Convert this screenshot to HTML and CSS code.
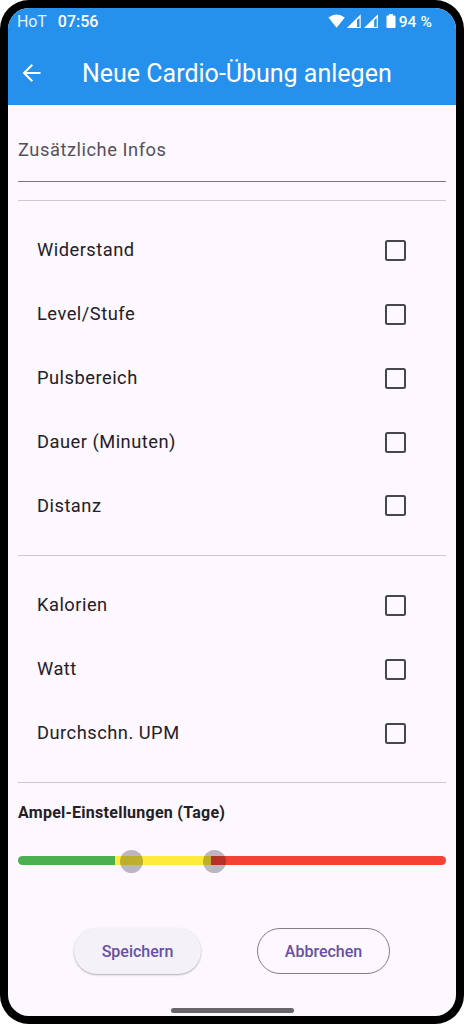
FILE: index.html
```
<!DOCTYPE html>
<html lang="de">
<head>
<meta charset="utf-8">
<title>Neue Cardio-Übung anlegen</title>
<link rel="stylesheet" href="styles.css">
</head>
<body>
<div class="phone">
  <div class="screen">
    <header class="header">
      <div class="status">
        <span class="carrier">HoT</span>
        <span class="clock">07:56</span>
        <svg class="status-icons" width="70" height="16" viewBox="0 0 70 16" fill="#fff">
          <path d="M.4 3.6Q8.5-2.5 16.8 3.6L8.6 13.8Z"/>
          <path fill-rule="evenodd" d="M18.800 14 32.700.2V14ZM29 6V13H31.500V4Z"/>
          <path fill-rule="evenodd" d="M36 14 49.900.2V14ZM46.200 6V13H48.700V4Z"/>
          <path d="M61 0h4v1.500h1.500q1 0 1 1V13q0 1-1 1H59.500q-1 0-1-1V2.500q0-1 1-1H61Z"/>
        </svg>
        <span class="battery">94 %</span>
      </div>
      <div class="appbar">
        <svg class="back" width="20" height="20" viewBox="0 0 20 20" fill="none" stroke="#fff" stroke-width="2">
          <path d="M18.500 10H2.500M10.300 1.700 2 10l8.300 8.300"/>
        </svg>
        <h1 class="title">Neue Cardio-Übung anlegen</h1>
      </div>
    </header>
    <main class="form">
      <div class="field">Zusätzliche Infos</div>
      <section class="group">
        <label class="row"><span>Widerstand</span><span class="box"></span></label>
        <label class="row"><span>Level/Stufe</span><span class="box"></span></label>
        <label class="row"><span>Pulsbereich</span><span class="box"></span></label>
        <label class="row"><span>Dauer (Minuten)</span><span class="box"></span></label>
        <label class="row"><span>Distanz</span><span class="box"></span></label>
      </section>
      <section class="group">
        <label class="row"><span>Kalorien</span><span class="box"></span></label>
        <label class="row"><span>Watt</span><span class="box"></span></label>
        <label class="row"><span>Durchschn. UPM</span><span class="box"></span></label>
      </section>
      <section class="limits">
        <h2 class="limits-title">Ampel-Einstellungen (Tage)</h2>
        <div class="slider">
          <div class="track"><i class="green"></i><i class="yellow"></i><i class="red"></i></div>
          <span class="thumb thumb-low"></span>
          <span class="thumb thumb-high"></span>
        </div>
      </section>
      <div class="actions">
        <button class="button save">Speichern</button>
        <button class="button cancel">Abbrechen</button>
      </div>
    </main>
    <div class="home"></div>
  </div>
</div>
</body>
</html>
```
FILE: styles.css
```
* { box-sizing: border-box; }
body {
  margin: 0;
  background: #fff;
  font-family: Roboto, sans-serif;
  color: #232027;
}
.phone {
  width: 464px;
  height: 1024px;
  padding: 8px;
  background: #000;
  border-radius: 29px;
}
.screen {
  height: 1008px;
  display: flex;
  flex-direction: column;
  background: #fdf7ff;
  border-radius: 21px;
  overflow: hidden;
}
.header {
  height: 97px;
  background: #2691ec;
  color: #fff;
}
.status {
  height: 27px;
  display: flex;
  align-items: center;
  padding: 0 24px 0 9px;
  font-size: 16px;
  line-height: 20px;
}
.carrier { color: #e4f1fd; letter-spacing: -.1px; }
.clock { margin-left: 11px; font-weight: 500; }
.status-icons { margin-left: auto; }
.battery { margin-left: 1px; font-size: 15.500px; font-weight: 500; letter-spacing: .1px; }
.appbar {
  height: 77px;
  display: flex;
  align-items: center;
  padding-left: 14px;
}
.back { margin-bottom: 2px; }
.title {
  margin: 0 0 0 40px;
  font-size: 25px;
  font-weight: 400;
  line-height: 32px;
}
.form { flex: 1; padding: 0 10px; }
.field {
  height: 77px;
  padding-top: 33px;
  border-bottom: 1px solid #7c7881;
  font-size: 18.300px;
  line-height: 24px;
  letter-spacing: .54px;
  color: #55515b;
  margin-bottom: 18px;
}
.group {
  border-top: 1px solid #cfc9d3;
  padding: 17px 40px 17.800px 19px;
}
.row {
  height: 63.800px;
  display: flex;
  align-items: center;
  justify-content: space-between;
  font-size: 18.300px;
  letter-spacing: .5px;
}
.box {
  width: 21px;
  height: 21px;
  margin-top: 1.500px;
  border: 2px solid #49454f;
  border-radius: 2.500px;
}
.limits { border-top: 1px solid #cfc9d3; padding-top: 19px; }
.limits-title {
  margin: 0;
  font-size: 16px;
  line-height: 22px;
  font-weight: 700;
  letter-spacing: .26px;
}
.slider { position: relative; height: 24px; margin-top: 26px; padding-top: 6px; }
.track { display: flex; height: 9px; border-radius: 5px; overflow: hidden; }
.green { width: 97px; background: #4caf50; }
.yellow { width: 96px; background: #ffeb3b; }
.red { flex: 1; background: #f44336; }
.thumb {
  position: absolute;
  top: 0;
  width: 23px;
  height: 23px;
  border-radius: 50%;
  background: rgba(0, 0, 0, .26);
}
.thumb-low { left: 101.500px; }
.thumb-high { left: 184.500px; }
.actions { display: flex; gap: 56px; padding: 54px 0 0 56px; }
.button {
  height: 46px;
  padding-top: 3px;
  border: 0;
  border-radius: 23px;
  font: 500 16px/20px Roboto, sans-serif;
  color: #6750a4;
}
.save {
  width: 127px;
  background: #f5f1f8;
  box-shadow: 0 1px 2px rgba(0, 0, 0, .3);
}
.cancel {
  width: 133px;
  background: transparent;
  border: 1px solid #827e87;
}
.home {
  align-self: center;
  width: 123px;
  height: 5px;
  margin-bottom: 3px;
  border-radius: 3px;
  background: #68656b;
}
```
